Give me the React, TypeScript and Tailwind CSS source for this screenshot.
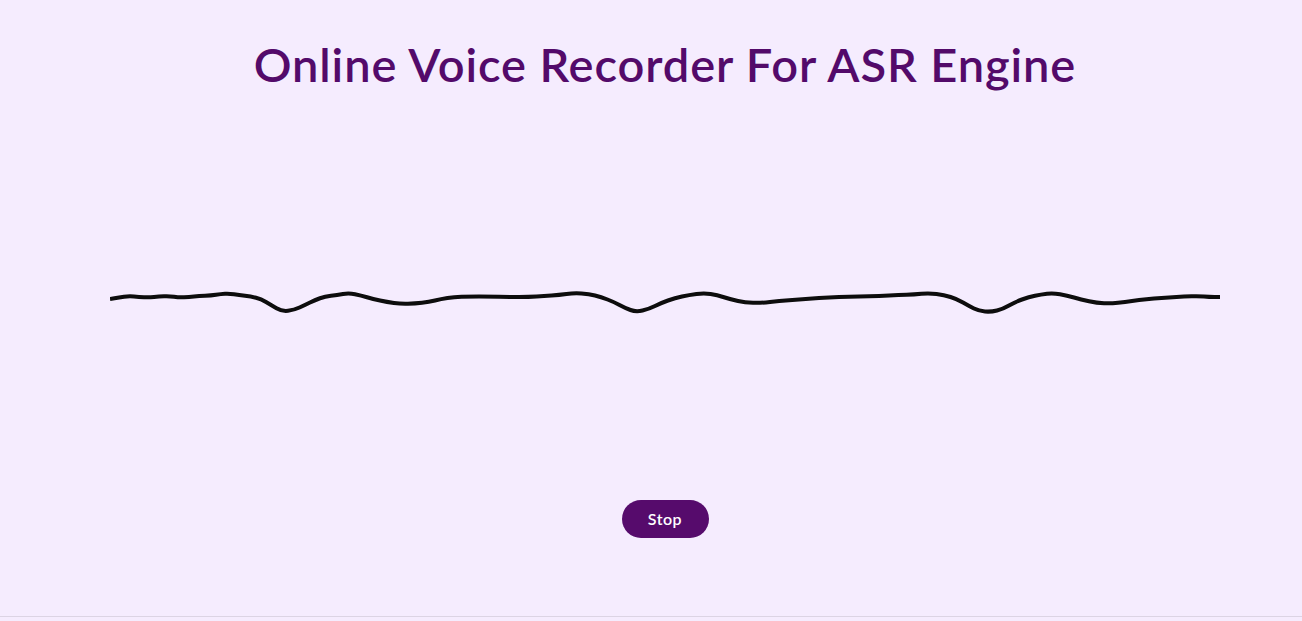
import React from "react";

const wave: [number, number][] = [
  [111, 299], [120, 297.5], [130, 296], [140, 297], [150, 297.5], [160, 296.5], [170, 296],
  [180, 297.5], [190, 297], [200, 296], [212, 295.5], [222, 294], [230, 293.5], [240, 295],
  [252, 296.5], [262, 299], [272, 305], [283, 311.5], [295, 310], [306, 305], [316, 300],
  [326, 296.5], [338, 295], [350, 293], [362, 295.5], [374, 299], [388, 302], [402, 304],
  [416, 303.5], [430, 302], [442, 299], [455, 297], [470, 296.5], [490, 296.5], [510, 297],
  [530, 297], [545, 296], [560, 295], [575, 293], [590, 294], [602, 297], [615, 302],
  [626, 308], [637, 312], [650, 309], [662, 303], [676, 298], [690, 295], [705, 293],
  [718, 295], [732, 299.5], [746, 302.5], [762, 303], [780, 301], [800, 299.5], [820, 298],
  [840, 297], [860, 296.5], [880, 296], [900, 295], [915, 294.5], [930, 293], [945, 295],
  [958, 299], [970, 306], [980, 311], [992, 312], [1004, 309], [1016, 302], [1030, 297],
  [1042, 294.5], [1054, 293], [1068, 295.5], [1082, 299.5], [1098, 303], [1112, 303.5],
  [1126, 302], [1140, 300], [1155, 298.5], [1170, 297.5], [1185, 296.5], [1200, 296],
  [1210, 297], [1221, 297],
];

const Waveform: React.FC = () => {
  const d = wave
    .map(([x, y], i) => {
      if (i === 0) return `M${x} ${y}`;
      const [px, py] = wave[i - 1];
      return `Q${px} ${py} ${(px + x) / 2} ${(py + y) / 2}`;
    })
    .join(" ");

  return (
    <svg width={1110} height={120} viewBox="111 237 1110 120" className="block mx-auto">
      <path
        d={`${d} L1221 297`}
        fill="none"
        stroke="#0d0d0d"
        strokeWidth={4}
        strokeLinejoin="round"
      />
    </svg>
  );
}

export default function App() {
  return (
    <div className="h-[621px] bg-[#f5ecfe] overflow-hidden">
      <div
        className="h-[617px] border-b border-[#dcd4e4] pl-[28px] flex flex-col items-center"
        style={{ fontFamily: "Lato, 'Noto Sans', sans-serif" }}
      >
        <h1 className="pt-[32px] text-[47px] leading-[64px] font-semibold tracking-[0.9px] text-[#530a6a]">
          Online Voice Recorder For ASR Engine
        </h1>

        <div className="mt-[141px] w-full">
          <Waveform />
        </div>

        <button className="mt-[143px] w-[87px] h-[38px] rounded-full bg-[#560b6c] text-white text-[16px] font-semibold tracking-[0.5px]">
          Stop
        </button>
      </div>
    </div>
  );
}
